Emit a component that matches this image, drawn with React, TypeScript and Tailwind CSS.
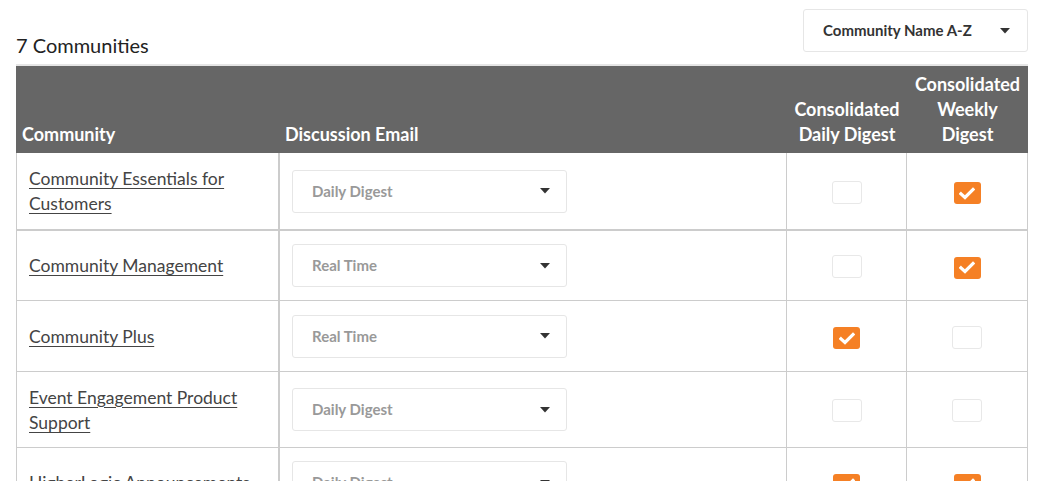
import React from "react";

type Row = {
  name: string[];
  email: string;
  daily: boolean;
  weekly: boolean;
  h: number;
  bb: string;
};

const rows: Row[] = [
  { name: ["Community Essentials for", "Customers"], email: "Daily Digest", daily: false, weekly: true, h: 76, bb: "border-b-2" },
  { name: ["Community Management"], email: "Real Time", daily: false, weekly: true, h: 69, bb: "border-b" },
  { name: ["Community Plus"], email: "Real Time", daily: true, weekly: false, h: 70, bb: "border-b" },
  { name: ["Event Engagement Product", "Support"], email: "Daily Digest", daily: false, weekly: false, h: 75, bb: "border-b" },
  { name: ["HigherLogic Announcements"], email: "Daily Digest", daily: true, weekly: true, h: 69, bb: "border-b" },
];

function Caret() {
  return (
    <svg width="10" height="6" viewBox="0 0 10 6" className="shrink-0">
      <path d="M0 0 H10 L5 5.5 Z" fill="#333" />
    </svg>
  );
}

function Box({ checked }: { checked: boolean }) {
  if (checked) {
    return (
      <div className="w-[27px] h-[22px] mt-[4px] rounded-[3px] bg-[#f58025] flex items-center justify-center">
        <svg width="16" height="13" viewBox="0 0 16 13">
          <path d="M2 6.8 L6 10.5 L14 2.5" stroke="#fff" strokeWidth="3.2" fill="none" strokeLinecap="square" strokeLinejoin="miter" />
        </svg>
      </div>
    );
  }
  return <div className="w-[30px] h-[23px] mt-[2px] rounded-[3px] border border-[#e8e8e8] bg-white" />;
}

export default function App() {
  return (
    <div className="bg-white w-[1043px] h-[481px] overflow-hidden pl-4 pr-[15px] pt-[9px]" style={{ fontFamily: "Lato, 'Open Sans', sans-serif" }}>
      <div className="flex items-end justify-between">
        <div className="text-[20px] leading-[24px] text-[#222] -mb-[5px]">7 Communities</div>
        <div className="w-[225px] h-[43px] border border-[#e6e6e6] rounded-[3px] flex items-center justify-between pl-[19px] pr-[17px]">
          <span className="text-[15px] font-bold text-[#333]">Community Name A-Z</span>
          <Caret />
        </div>
      </div>
      <div className="mt-[12px] border-t-2 border-[#e6e6e6]">
        <div className="flex bg-[#666] text-white font-bold text-[18px] leading-[25px] h-[87px] items-end">
          <div className="w-[264px] pl-[6px] pb-[6px]">Community</div>
          <div className="w-[507px] pl-[5px] pb-[6px]">Discussion Email</div>
          <div className="w-[120px] text-center pb-[6px]">
            Consolidated<br />Daily Digest
          </div>
          <div className="w-[121px] text-center pb-[6px]">
            Consolidated<br />Weekly<br />Digest
          </div>
        </div>
        {rows.map((r, i) => (
          <div key={i} className={"flex border-l border-r border-[#ccc] " + r.bb} style={{ height: r.h + (r.bb === "border-b-2" ? 2 : 1) }}>
            <div className="w-[263px] border-r-2 border-[#ccc] flex items-center pl-[12px]">
              <a href="#" className="text-[17.5px] leading-[25px] text-[#444] underline underline-offset-[3px] decoration-[1px] whitespace-nowrap">
                {r.name.map((n, j) => (
                  <React.Fragment key={j}>
                    {j > 0 && <br />}
                    {n}
                  </React.Fragment>
                ))}
              </a>
            </div>
            <div className="w-[507px] border-r border-[#ccc] flex items-center pl-[12px]">
              <div className="w-[275px] h-[43px] border border-[#e6e6e6] rounded-[3px] flex items-center justify-between pl-[19px] pr-[16px]">
                <span className="text-[15px] font-bold text-[#999]">{r.email}</span>
                <Caret />
              </div>
            </div>
            <div className="w-[120px] border-r border-[#ccc] flex items-center justify-center">
              <Box checked={r.daily} />
            </div>
            <div className="w-[120px] flex items-center justify-center">
              <Box checked={r.weekly} />
            </div>
          </div>
        ))}
      </div>
    </div>
  );
}
